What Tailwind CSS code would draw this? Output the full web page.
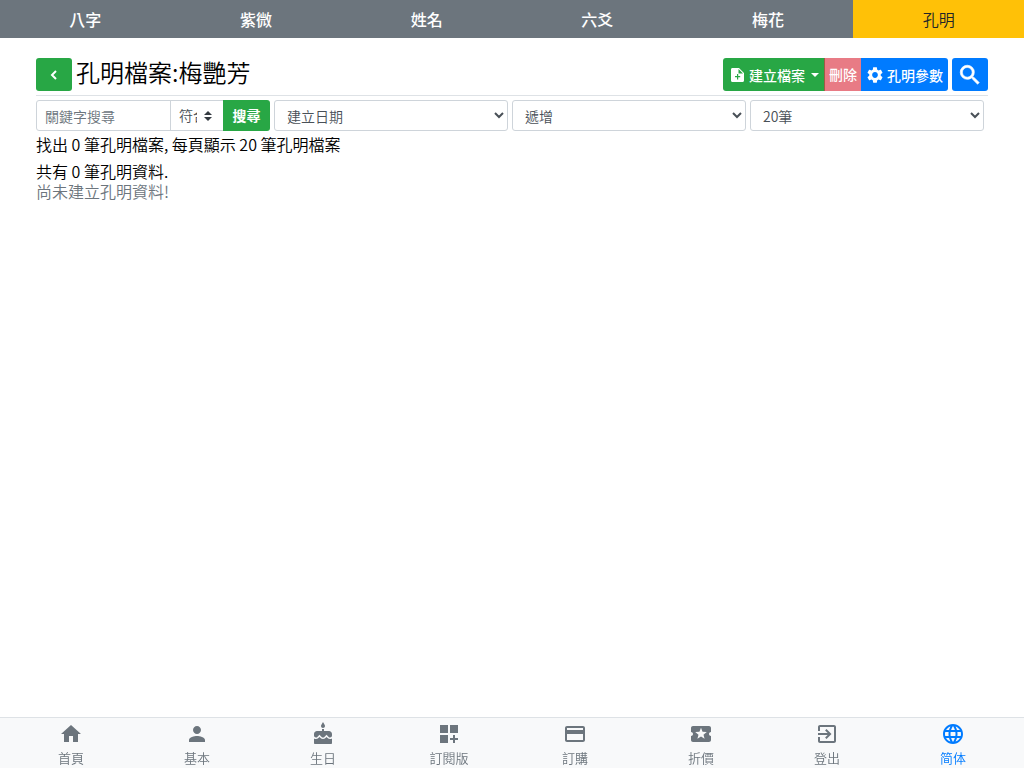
<!DOCTYPE html>
<html lang="zh-Hant">
<head>
<meta charset="utf-8">
<meta name="viewport" content="width=device-width, initial-scale=1">
<title>孔明檔案</title>
<script src="https://cdn.jsdelivr.net/npm/@tailwindcss/browser@4"></script>
</head>
<body class="flex min-h-screen flex-col bg-white font-['Noto_Sans_CJK_TC',sans-serif] text-base font-[350] text-black">
<nav class="grid h-[38px] grid-cols-6 bg-[#6c757d] text-center font-medium leading-[38px] text-white">
  <a href="#">八字</a>
  <a href="#">紫微</a>
  <a href="#">姓名</a>
  <a href="#">六爻</a>
  <a href="#">梅花</a>
  <a href="#" class="bg-[#ffc107] font-[350] text-[#212529]" aria-current="page">孔明</a>
</nav>

<main class="grow px-9 pt-5">
  <header class="flex items-start justify-between border-b border-[#dee2e6] pb-1">
    <div class="flex gap-1">
      <button aria-label="返回" class="flex h-[33px] w-9 items-center justify-center rounded-[3px] bg-[#28a745] text-white">
        <svg class="size-4" viewBox="0 0 24 24" fill="none" stroke="currentColor" stroke-width="3"><path d="M15 6 9 12l6 6"/></svg>
      </button>
      <h1 class="text-2xl font-[350] leading-7">孔明檔案:梅艷芳</h1>
    </div>
    <div class="flex gap-1 text-sm font-medium text-white">
      <div class="flex">
        <button class="flex h-[33px] w-[102px] items-center rounded-l-[3px] bg-[#28a745] pl-[7px]">
          <svg class="mr-1 h-[14px] w-[15px]" viewBox="0 0 15 14" fill="currentColor"><path d="M2.500 0H9l5 5v7.500c0 .9-.6 1.500-1.500 1.500h-10C1.600 14 1 13.400 1 12.500v-11C1 .6 1.600 0 2.500 0zM8.500 1v4.500H13zM7 6v2H5v1.200h2v2.300h1.200V9.200h2V8h-2V6z" fill-rule="evenodd"/></svg>
          <span>建立檔案</span>
          <svg class="ml-1.5 h-1 w-2" viewBox="0 0 8 4" fill="currentColor"><path d="M0 0h8L4 4z"/></svg>
        </button>
        <button disabled class="-ml-px h-[33px] w-[37px] bg-[#dc3545] pb-0.5 pl-px opacity-65">刪除</button>
        <button class="flex h-[33px] w-[87px] items-center rounded-r-[3px] bg-[#007bff] pl-1.5">
          <svg class="mr-1 size-4" viewBox="2 2 20 20" fill="currentColor"><path d="M19.14 12.94c.04-.3.06-.61.06-.94 0-.32-.02-.64-.07-.94l2.030-1.580c.18-.14.23-.41.12-.61l-1.920-3.320c-.12-.22-.37-.29-.59-.22l-2.390.96c-.5-.38-1.030-.7-1.620-.94l-.36-2.540c-.04-.24-.24-.41-.48-.41h-3.840c-.24 0-.43.17-.47.41l-.36 2.540c-.59.24-1.130.57-1.620.94l-2.390-.96c-.22-.08-.47 0-.59.22L2.740 8.870c-.12.21-.08.47.12.61l2.030 1.580c-.05.3-.09.63-.09.94s.02.64.07.94l-2.030 1.580c-.18.14-.23.41-.12.61l1.920 3.320c.12.22.37.29.59.22l2.390-.96c.5.38 1.030.7 1.620.94l.36 2.540c.05.24.24.41.48.41h3.840c.24 0 .44-.17.47-.41l.36-2.540c.59-.24 1.130-.56 1.620-.94l2.390.96c.22.08.47 0 .59-.22l1.920-3.320c.12-.22.07-.47-.12-.61l-2.010-1.580zM12 15.600c-1.980 0-3.600-1.620-3.600-3.600s1.620-3.600 3.600-3.600 3.600 1.620 3.600 3.600-1.620 3.600-3.600 3.600z"/></svg>
          <span>孔明參數</span>
        </button>
      </div>
      <button aria-label="搜尋" class="flex h-[33px] w-9 items-center justify-center rounded-[3px] bg-[#007bff]">
        <svg class="size-[26px]" viewBox="0 0 24 24" fill="currentColor" stroke="currentColor" stroke-width=".6"><path d="M15.500 14h-.79l-.28-.27A6.471 6.471 0 0 0 16 9.500 6.500 6.500 0 1 0 9.500 16c1.610 0 3.090-.59 4.230-1.570l.27.28v.79l5 4.990L20.490 19l-4.990-5zm-6 0C7.010 14 5 11.990 5 9.500S7.010 5 9.500 5 14 7.010 14 9.500 11.990 14 9.500 14z"/></svg>
      </button>
    </div>
  </header>

  <form class="mt-1 grid grid-cols-4 text-sm text-[#495057]" onsubmit="return false">
    <div class="mr-1 flex h-[31px]">
      <input type="text" aria-label="關鍵字搜尋" placeholder="關鍵字搜尋" class="min-w-0 grow rounded-l-[3px] border border-[#ced4da] px-2 placeholder:text-[#6c757d]">
      <div class="relative -ml-px w-[54px] shrink-0">
        <select aria-label="搜尋條件" class="h-[31px] w-full appearance-none border border-[#ced4da] bg-white pb-0.5 pl-2 pr-[26px]"><option>符合</option></select>
        <svg class="pointer-events-none absolute right-3 top-[11px] h-[10px] w-2" viewBox="0 0 4 5" fill="#343a40"><path d="M2 0 0 2h4zm0 5L0 3h4z"/></svg>
      </div>
      <button class="relative -ml-px w-[47px] shrink-0 rounded-r-[3px] bg-[#28a745] pb-0.5 font-bold text-white">搜尋</button>
    </div>
    <select aria-label="排序欄位" class="mr-1 h-[31px] rounded-[3px] border border-[#ced4da] bg-white px-2"><option>建立日期</option></select>
    <select aria-label="排序方式" class="mr-1 h-[31px] rounded-[3px] border border-[#ced4da] bg-white px-2"><option>遞增</option></select>
    <select aria-label="每頁筆數" class="mr-1 h-[31px] rounded-[3px] border border-[#ced4da] bg-white px-2"><option>20筆</option></select>
  </form>

  <p class="leading-[26px]">找出 0 筆孔明檔案, 每頁顯示 20 筆孔明檔案</p>
  <p class="mt-1 leading-5">共有 0 筆孔明資料.</p>
  <p class="leading-5 text-[#6c757d]">尚未建立孔明資料!</p>
</main>

<nav class="sticky bottom-0 flex h-[51px] border-t border-[#dee2e6] bg-[#f8f9fa] px-2 text-[13px] leading-6 text-[#6c757d]">
  <a href="#" class="flex flex-1 flex-col items-center pt-1">
    <svg class="size-6 shrink-0" viewBox="0 0 24 24" fill="currentColor"><path d="M10 20v-6h4v6h5v-8h3L12 3 2 12h3v8z"/></svg>首頁</a>
  <a href="#" class="flex flex-1 flex-col items-center pt-1">
    <svg class="size-6 shrink-0" viewBox="0 0 24 24" fill="currentColor"><path d="M12 12c2.210 0 4-1.790 4-4s-1.790-4-4-4-4 1.790-4 4 1.790 4 4 4zm0 2c-2.670 0-8 1.340-8 4v2h16v-2c0-2.660-5.330-4-8-4z"/></svg>基本</a>
  <a href="#" class="flex flex-1 flex-col items-center pt-1">
    <svg class="size-6 shrink-0" viewBox="0 0 24 24" fill="currentColor"><path d="M12 6c1.110 0 2-.9 2-2 0-.38-.1-.73-.29-1.030L12 0l-1.710 2.970c-.19.3-.29.65-.29 1.030 0 1.100.9 2 2 2zm4.600 9.990-1.070-1.070-1.080 1.070c-1.300 1.300-3.580 1.310-4.890 0l-1.070-1.070-1.090 1.070C6.750 16.640 5.880 17 4.960 17c-.73 0-1.400-.23-1.960-.61V21c0 .55.45 1 1 1h16c.55 0 1-.45 1-1v-4.610c-.56.38-1.230.61-1.960.61-.92 0-1.790-.36-2.440-1.010zM18 9h-5V7h-2v2H6c-1.660 0-3 1.340-3 3v1.540c0 1.080.88 1.960 1.960 1.960.52 0 1.020-.2 1.380-.57l2.140-2.130 2.130 2.130c.74.74 2.030.74 2.770 0l2.140-2.130 2.130 2.130c.37.37.86.57 1.380.57 1.080 0 1.960-.88 1.960-1.960V12c.01-1.660-1.330-3-2.990-3z"/></svg>生日</a>
  <a href="#" class="flex flex-1 flex-col items-center pt-1">
    <svg class="size-6 shrink-0" viewBox="0 0 24 24" fill="currentColor"><path d="M3 3h8v8H3zM13 3h8v8h-8zM3 13h8v8H3zM18 13h-2v3h-3v2h3v3h2v-3h3v-2h-3z"/></svg>訂閱版</a>
  <a href="#" class="flex flex-1 flex-col items-center pt-1">
    <svg class="size-6 shrink-0" viewBox="0 0 24 24" fill="currentColor"><path d="M20 4H4c-1.110 0-1.990.89-1.990 2L2 18c0 1.110.89 2 2 2h16c1.110 0 2-.89 2-2V6c0-1.110-.89-2-2-2zm0 14H4v-6h16v6zm0-10H4V6h16v2z"/></svg>訂購</a>
  <a href="#" class="flex flex-1 flex-col items-center pt-1">
    <svg class="size-6 shrink-0" viewBox="0 0 24 24" fill="currentColor"><path d="M20 12c0-1.100.9-2 2-2V6c0-1.100-.9-2-2-2H4c-1.100 0-1.990.9-1.990 2v4c1.100 0 1.990.9 1.990 2s-.89 2-2 2v4c0 1.100.9 2 2 2h16c1.100 0 2-.9 2-2v-4c-1.100 0-2-.9-2-2zm-4.420 4.800L12 14.500l-3.580 2.300 1.080-4.120-3.290-2.690 4.240-.25L12 5.800l1.540 3.950 4.240.25-3.290 2.690 1.090 4.110z"/></svg>折價</a>
  <a href="#" class="flex flex-1 flex-col items-center pt-1">
    <svg class="size-6 shrink-0" viewBox="0 0 24 24" fill="currentColor"><path d="M10.090 15.590 11.500 17l5-5-5-5-1.410 1.410L12.670 11H3v2h9.670l-2.580 2.590zM19 3H5c-1.110 0-2 .9-2 2v4h2V5h14v14H5v-4H3v4c0 1.100.89 2 2 2h14c1.100 0 2-.9 2-2V5c0-1.100-.9-2-2-2z"/></svg>登出</a>
  <a href="#" class="flex flex-1 flex-col items-center pt-1 text-[#007bff]">
    <svg class="size-6 shrink-0" viewBox="0 0 24 24" fill="currentColor"><path d="M11.990 2C6.470 2 2 6.480 2 12s4.470 10 9.990 10C17.520 22 22 17.520 22 12S17.520 2 11.990 2zm6.930 6h-2.950c-.32-1.250-.78-2.450-1.380-3.560 1.840.63 3.370 1.910 4.330 3.560zM12 4.040c.83 1.200 1.480 2.530 1.910 3.960h-3.820c.43-1.430 1.080-2.760 1.910-3.960zM4.260 14C4.100 13.360 4 12.690 4 12s.1-1.360.26-2h3.380c-.08.66-.14 1.320-.14 2s.06 1.340.14 2H4.260zm.82 2h2.950c.32 1.250.78 2.450 1.380 3.560-1.840-.63-3.370-1.900-4.330-3.560zm2.950-8H5.080c.96-1.660 2.490-2.930 4.330-3.560C8.810 5.550 8.350 6.750 8.030 8zM12 19.960c-.83-1.200-1.480-2.530-1.910-3.960h3.820c-.43 1.430-1.080 2.760-1.910 3.960zM14.340 14H9.660c-.09-.66-.16-1.320-.16-2s.07-1.350.16-2h4.680c.09.65.16 1.320.16 2s-.07 1.340-.16 2zm.25 5.560c.6-1.110 1.060-2.310 1.380-3.560h2.950c-.96 1.650-2.490 2.930-4.330 3.560zM16.360 14c.08-.66.14-1.320.14-2s-.06-1.340-.14-2h3.380c.16.64.26 1.310.26 2s-.1 1.360-.26 2h-3.380z"/></svg>简体</a>
</nav>
</body>
</html>
